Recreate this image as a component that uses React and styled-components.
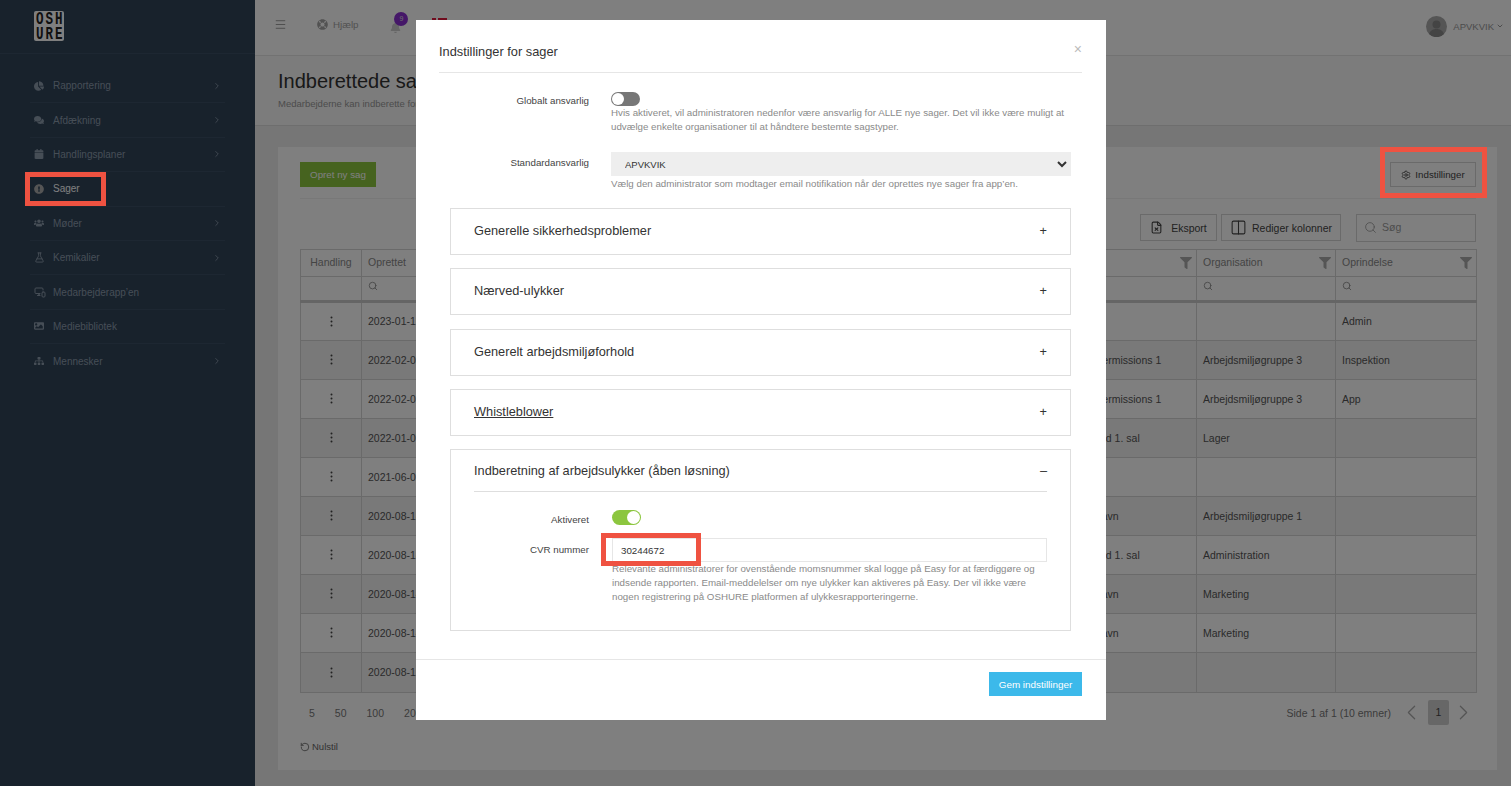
import React from 'react'
import styled, {createGlobalStyle} from 'styled-components'
import {
	FaChartPie, FaComments, FaCalendar, FaExclamationCircle, FaUsers, FaImage, FaSitemap,
	FaLifeRing, FaBell, FaFilter,
} from 'react-icons/fa'
import {
	ChevronRight, ChevronLeft, ChevronDown, FlaskConical, MonitorSmartphone, Menu, Search,
	Settings, FileX, Columns2, RotateCcw,
} from 'lucide-react'

const GlobalStyle = createGlobalStyle`
	html, body {
		margin: 0;
		padding: 0;
		height: 100%;
		overflow: hidden;
		background: #ededed;
	}
	* { box-sizing: border-box; }
	body {
		font-family: "Liberation Sans", Arial, sans-serif;
		color: #333;
	}
`

const Page = styled.div`
	display: flex;
	width: 1511px;
	height: 786px;
	overflow: hidden;
`

const Highlight = styled.span`
	position: absolute;
	z-index: 20;
	top: ${p => p.$top}px;
	left: ${p => p.$left}px;
	width: ${p => p.$width}px;
	height: ${p => p.$height}px;
	border: 5px solid #ef5241;
	pointer-events: none;
`

/* sidebar */
const Sidebar = styled.aside`
	flex: 0 0 255px;
	background: #304459;
`

const LogoBar = styled.div`
	height: 54px;
	padding: 11px 0 0 34px;
	border-bottom: 1px solid #3a4f64;
`

const Logo = styled.div`
	width: 30px;
	height: 30px;
	border-radius: 2px;
	background: #fff;
`

const LogoText = styled.div`
	color: #222;
	font-family: "Liberation Mono", monospace;
	font-size: 12.5px;
	font-weight: 700;
	line-height: 10.7px;
	letter-spacing: 2px;
	padding: 1px 0 0 2px;
	white-space: pre;
	transform: scaleY(1.4);
	transform-origin: top;
`

const Nav = styled.nav`
	padding: 15px 30px 0;
`

const NavItem = styled.a`
	position: relative;
	display: flex;
	align-items: center;
	height: 34.4px;
	padding-left: 4px;
	font-size: 10px;
	color: ${p => p.$active ? '#fff' : '#8d9cad'};
	border-bottom: ${p => p.$last ? 'none' : '1px solid #3a4f64'};
`

const NavIcon = styled.span`
	flex: 0 0 19px;
	display: flex;
	align-items: center;
	font-size: 10px;
	color: ${p => p.$active ? '#aaa' : '#8d9cad'};
`

const NavLabel = styled.span`
	flex: 1;
`

const NavChevron = styled(ChevronRight)`
	width: 10px;
	height: 10px;
	margin-right: 3px;
`

/* main column */
const Main = styled.main`
	flex: 1;
	display: flex;
	flex-direction: column;
	min-width: 0;
`

const Topbar = styled.header`
	flex: 0 0 56px;
	display: flex;
	align-items: center;
	padding: 0 7px 6px 19px;
	background: #fff;
	border-bottom: 1px solid #e4e4e4;
	color: #888;
`

const TopItem = styled.span`
	display: flex;
	align-items: center;
	gap: 5px;
	margin-left: ${p => p.$gap}px;
	font-size: 9.75px;
	color: #a4a4a4;
`

const BellWrap = styled.span`
	position: relative;
	display: flex;
	margin-left: 32px;
	font-size: 11px;
	color: #ccc;
	padding-top: 5px;
`

const Badge = styled.span`
	position: absolute;
	top: -5px;
	left: 4px;
	width: 14px;
	height: 14px;
	border-radius: 50%;
	background: #8a2fd0;
	color: #ddd;
	font-size: 7px;
	line-height: 14px;
	text-align: center;
`

const Flag = styled.svg`
	display: block;
	align-self: flex-start;
	width: 15px;
	height: 11px;
	margin: 18px 0 0 31px;
`

const Account = styled.div`
	margin-left: auto;
	display: flex;
	align-items: center;
	gap: 6px;
	font-size: 9.5px;
	color: #999;
	padding-top: 3px;
`

const Avatar = styled.svg`
	display: block;
	width: 21px;
	height: 21px;
`

const SubHeader = styled.div`
	flex: 0 0 70px;
	padding: 12px 23px 0;
	background: #f8f8f8;
	border-bottom: 1px solid #dcdcdc;
`

const Title = styled.h1`
	margin: 0;
	font-size: 20px;
	font-weight: 400;
	line-height: 26px;
	color: #333;
`

const SubTitle = styled.p`
	margin: 4px 0 0;
	font-size: 9.5px;
	color: #999;
`

const Content = styled.div`
	flex: 1;
	display: flex;
	padding: 21px 14px 16px 23px;
	background: #ededed;
	min-height: 0;
`

const Card = styled.section`
	flex: 1;
	padding: 15px 21px 0 22px;
	background: #fff;
	min-width: 0;
`

const CardTop = styled.div`
	display: flex;
	justify-content: space-between;
	align-items: center;
	padding-bottom: 11px;
	border-bottom: 1px solid #f1f1f1;
`

const GreenButton = styled.button`
	width: 76px;
	height: 25px;
	padding: 0;
	border: none;
	background: #8cc63f;
	color: #fff;
	font: 400 9.75px "Liberation Sans", sans-serif;
`

const OutlineButton = styled.button`
	position: relative;
	display: flex;
	align-items: center;
	justify-content: center;
	gap: ${p => p.$gap || 4}px;
	width: ${p => p.$width}px;
	height: ${p => p.$height}px;
	padding: 0;
	background: #fff;
	border: 1px solid #d4d4d4;
	color: #444;
	font: 400 ${p => p.$size || 10.5}px "Liberation Sans", sans-serif;
`

const Toolbar = styled.div`
	display: flex;
	justify-content: flex-end;
	align-items: flex-start;
	gap: 4px;
	margin-top: 15px;
	height: 35px;
`

const SearchBox = styled.div`
	display: flex;
	align-items: center;
	gap: 5px;
	width: 120px;
	height: 28px;
	margin-left: 11px;
	padding: 0 0 2px 7px;
	border: 1px solid #d4d4d4;
	font-size: 10.5px;
	color: #999;
`

const Table = styled.table`
	width: 1176px;
	border-collapse: collapse;
	table-layout: fixed;
	font-size: 10.5px;
	color: #666;
`

const HeadCell = styled.th`
	position: relative;
	height: 27px;
	padding: 0 6px 2px;
	border: 1px solid #d4d4d4;
	font-weight: 400;
	text-align: ${p => p.$center ? 'center' : 'left'};
	color: #888;
`

const FilterIcon = styled(FaFilter)`
	position: absolute;
	top: 7px;
	right: 4px;
	width: 12px;
	height: 12px;
	color: #aaa;
`

const FilterCell = styled.td`
	height: 25px;
	padding: 0 6px 5px;
	border: 1px solid #d4d4d4;
	border-bottom: 3px solid #cacaca;
	color: #888;
`

const SmallSearch = styled(Search)`
	display: block;
	width: 10px;
	height: 10px;
`

const Row = styled.tr`
	background: ${p => p.$odd ? '#f2f2f2' : '#fff'};
	&:last-child td {
		height: 40px;
	}
`

const Cell = styled.td`
	height: 39px;
	padding: 0 6px 1px;
	border: 1px solid #d4d4d4;
	white-space: nowrap;
	overflow: hidden;
	color: #555;
`

const ActionCell = styled(Cell)`
	text-align: center;
	color: #444;
`

const Dots = styled.svg`
	display: block;
	width: 3px;
	height: 11px;
	margin: 0 auto;
`

const PagerRow = styled.div`
	display: flex;
	justify-content: space-between;
	align-items: center;
	height: 25px;
	margin-top: 7px;
	font-size: 10.5px;
	color: #777;
`

const PageSizes = styled.div`
	display: flex;
	gap: 20px;
	padding-left: 9px;
`

const Pager = styled.div`
	display: flex;
	align-items: center;
`

const PagerArrow = styled.span`
	display: flex;
	margin: ${p => p.$margin};
	color: #aaa;
`

const PageNumber = styled.span`
	width: 21px;
	height: 25px;
	border-radius: 2px;
	background: #cfcfcf;
	color: #444;
	line-height: 25px;
	text-align: center;
`

const Reset = styled.div`
	display: flex;
	align-items: center;
	gap: 2px;
	margin-top: 16px;
	font-size: 9.5px;
	color: #666;
`

/* dialog */
const Overlay = styled.div`
	position: absolute;
	inset: 0;
	z-index: 10;
	background: rgba(0, 0, 0, 0.5);
`

const Modal = styled.div`
	width: 690px;
	height: 700px;
	margin: 20px 0 0 416px;
	padding: 0 24px 0 23px;
	background: #fff;
	position: relative;
`

const ModalHeader = styled.div`
	display: flex;
	justify-content: space-between;
	height: 53px;
	padding-top: 24px;
	border-bottom: 1px solid #e6e6e6;
	font-size: 12.8px;
	color: #333;
`

const Close = styled.span`
	margin-top: 1px;
	font-size: 14px;
	line-height: 9px;
	color: #bbb;
`

const FormRow = styled.div`
	display: grid;
	grid-template-columns: ${p => p.$label}px 1fr;
	column-gap: ${p => p.$gap}px;
	margin-top: ${p => p.$top}px;
`

const FormLabel = styled.label`
	text-align: right;
	font-size: 9.75px;
	color: #444;
	padding-top: ${p => p.$pad}px;
`

const Toggle = styled.span`
	position: relative;
	display: block;
	width: 29px;
	height: ${p => p.$on ? 15 : 14}px;
	border-radius: 8px;
	background: ${p => p.$on ? '#8cc63f' : '#777'};
	&::after {
		content: '';
		position: absolute;
		top: 1px;
		left: ${p => p.$on ? '15px' : '1px'};
		width: ${p => p.$on ? 13 : 12}px;
		height: ${p => p.$on ? 13 : 12}px;
		border-radius: 50%;
		background: #fff;
	}
`

const Help = styled.p`
	margin: ${p => p.$top || 0}px 0 0;
	font-size: 9.75px;
	line-height: 14px;
	color: #8a8a8a;
`

const Select = styled.select`
	display: block;
	width: 460px;
	height: 24px;
	padding-left: 9px;
	background: #eee;
	border: 1px solid #eee;
	border-radius: 0;
	font: 400 9.5px "Liberation Sans", sans-serif;
	color: #333;
`

const Accordion = styled.div`
	width: 621px;
	margin: ${p => p.$top}px 0 0 11px;
	padding: 0 23px;
	height: ${p => p.$height}px;
	border: 1px solid #dedede;
`

const AccordionHead = styled.div`
	display: flex;
	justify-content: space-between;
	align-items: center;
	height: ${p => p.$open ? 42 : 42}px;
	font-size: 12.75px;
	color: #333;
	border-bottom: ${p => p.$open ? '1px solid #dedede' : 'none'};
`

const AccordionTitle = styled.span`
	text-decoration: ${p => p.$underline ? 'underline' : 'none'};
`

const AccordionBody = styled.div`
	padding-top: 18px;
`

const TextField = styled.input`
	position: relative;
	display: block;
	width: 435px;
	height: 24px;
	padding: 0 0 0 8px;
	border: 1px solid #e6e6e6;
	font: 400 9.75px "Liberation Sans", sans-serif;
	color: #333;
	outline: none;
`

const FieldWrap = styled.div`
	position: relative;
`

const ModalFooter = styled.div`
	display: flex;
	justify-content: flex-end;
	margin: 28px -24px 0 -23px;
	padding: 12px 24px 0 0;
	border-top: 1px solid #e6e6e6;
`

const SaveButton = styled.button`
	width: 93px;
	height: 24px;
	padding: 0;
	border: none;
	background: #3cb9ea;
	color: #fff;
	font: 400 9.9px "Liberation Sans", sans-serif;
`

const navItems = [
	{label: 'Rapportering', icon: <FaChartPie/>, more: true},
	{label: 'Afdækning', icon: <FaComments/>, more: true},
	{label: 'Handlingsplaner', icon: <FaCalendar/>, more: true},
	{label: 'Sager', icon: <FaExclamationCircle/>, active: true},
	{label: 'Møder', icon: <FaUsers/>, more: true},
	{label: 'Kemikalier', icon: <FlaskConical size={11}/>, more: true},
	{label: 'Medarbejderapp’en', icon: <MonitorSmartphone size={12}/>},
	{label: 'Mediebibliotek', icon: <FaImage/>},
	{label: 'Mennesker', icon: <FaSitemap/>, more: true},
]

const rows = [
	{date: '2023-01-12', origin: 'Admin'},
	{date: '2022-02-03', place: 'Tester permissions 1', org: 'Arbejdsmiljøgruppe 3', origin: 'Inspektion'},
	{date: '2022-02-03', place: 'Tester permissions 1', org: 'Arbejdsmiljøgruppe 3', origin: 'App'},
	{date: '2022-01-07', place: 'Lager ved 1. sal', org: 'Lager'},
	{date: '2021-06-02'},
	{date: '2020-08-18', place: 'København', org: 'Arbejdsmiljøgruppe 1'},
	{date: '2020-08-18', place: 'Lager ved 1. sal', org: 'Administration'},
	{date: '2020-08-14', place: 'København', org: 'Marketing'},
	{date: '2020-08-14', place: 'København', org: 'Marketing'},
	{date: '2020-08-12'},
]

const columns = [61, 139, 200, 200, 158, 138, 139, 141]
const closedSections = [
	{title: 'Generelle sikkerhedsproblemer', top: 17},
	{title: 'Nærved-ulykker', top: 13},
	{title: 'Generelt arbejdsmiljøforhold', top: 14},
	{title: 'Whistleblower', top: 13, underline: true},
]

const App = () => (
	<Page>
		<GlobalStyle/>
		<Sidebar>
			<LogoBar><Logo><LogoText>{'OSH\nURE'}</LogoText></Logo></LogoBar>
			<Nav>
				{navItems.map((item, i) => (
					<NavItem key={item.label} $active={item.active} $last={i === navItems.length - 1}>
						<NavIcon $active={item.active}>{item.icon}</NavIcon>
						<NavLabel>{item.label}</NavLabel>
						{item.more && <NavChevron/>}
						{item.active && <Highlight $top={0} $left={-5} $width={81} $height={34}/>}
					</NavItem>
				))}
			</Nav>
		</Sidebar>
		<Main>
			<Topbar>
				<Menu size={13} strokeWidth={1.5}/>
				<TopItem $gap={30}><FaLifeRing size={11}/> Hjælp</TopItem>
				<BellWrap><FaBell/><Badge>9</Badge></BellWrap>
				<Flag viewBox="0 0 15 11">
					<rect width="15" height="11" fill="#e0183c"/>
					<rect x="4" width="2" height="11" fill="#fff"/>
					<rect y="4.5" width="15" height="2" fill="#fff"/>
				</Flag>
				<Account>
					<Avatar viewBox="0 0 21 21">
						<circle cx="10.5" cy="10.5" r="10.5" fill="#aaa"/>
						<circle cx="10.5" cy="8.5" r="4" fill="#888"/>
						<path d="M3 18c1.500-4 4.500-5 7.500-5s6 1 7.500 5a10.500 10.500 0 0 1-15 0z" fill="#888"/>
					</Avatar>
					APVKVIK <ChevronDown size={8} strokeWidth={3} style={{marginLeft: -4}}/>
				</Account>
			</Topbar>
			<SubHeader>
				<Title>Indberettede sager</Title>
				<SubTitle>Medarbejderne kan indberette forhold via app’en</SubTitle>
			</SubHeader>
			<Content>
				<Card>
					<CardTop>
						<GreenButton>Opret ny sag</GreenButton>
						<OutlineButton $width={86} $height={25} $size={9.75}>
							<Settings size={10}/> Indstillinger
							<Highlight $top={-16} $left={-11} $width={107} $height={51}/>
						</OutlineButton>
					</CardTop>
					<Toolbar>
						<OutlineButton $width={77} $height={27} $gap={8}><FileX size={13}/> Eksport</OutlineButton>
						<OutlineButton $width={120} $height={27} $gap={5}><Columns2 size={17} strokeWidth={1.5}/> Rediger kolonner</OutlineButton>
						<SearchBox><Search size={13} strokeWidth={1.5}/> Søg</SearchBox>
					</Toolbar>
					<Table>
						<colgroup>
							{columns.map((w, i) => <col key={i} style={{width: w}}/>)}
						</colgroup>
						<thead>
							<tr>
								<HeadCell $center>Handling</HeadCell>
								<HeadCell>Oprettet</HeadCell>
								<HeadCell/>
								<HeadCell/>
								<HeadCell/>
								<HeadCell><FilterIcon/></HeadCell>
								<HeadCell>Organisation<FilterIcon/></HeadCell>
								<HeadCell>Oprindelse<FilterIcon/></HeadCell>
							</tr>
							<tr>
								<FilterCell/>
								<FilterCell><SmallSearch/></FilterCell>
								<FilterCell/>
								<FilterCell/>
								<FilterCell/>
								<FilterCell><SmallSearch/></FilterCell>
								<FilterCell><SmallSearch/></FilterCell>
								<FilterCell><SmallSearch/></FilterCell>
							</tr>
						</thead>
						<tbody>
							{rows.map((r, i) => (
								<Row key={i} $odd={i % 2 === 1}>
									<ActionCell>
										<Dots viewBox="0 0 3 11" fill="currentColor">
											<circle cx="1.5" cy="1.500" r="1"/>
											<circle cx="1.5" cy="5.500" r="1"/>
											<circle cx="1.5" cy="9.500" r="1"/>
										</Dots>
									</ActionCell>
									<Cell>{r.date}</Cell>
									<Cell/>
									<Cell/>
									<Cell/>
									<Cell>{r.place}</Cell>
									<Cell>{r.org}</Cell>
									<Cell>{r.origin}</Cell>
								</Row>
							))}
						</tbody>
					</Table>
					<PagerRow>
						<PageSizes>
							<span>5</span><span>50</span><span>100</span><span>200</span>
						</PageSizes>
						<Pager>
							Side 1 af 1 (10 emner)
							<PagerArrow $margin="0 4px 0 8px"><ChevronLeft size={25} strokeWidth={1.2}/></PagerArrow>
							<PageNumber>1</PageNumber>
							<PagerArrow $margin="0 0 0 2px"><ChevronRight size={25} strokeWidth={1.2}/></PagerArrow>
						</Pager>
					</PagerRow>
					<Reset><RotateCcw size={10}/> Nulstil</Reset>
				</Card>
			</Content>
		</Main>
		<Overlay>
			<Modal>
				<ModalHeader>
					Indstillinger for sager
					<Close>×</Close>
				</ModalHeader>
				<FormRow $label={150} $gap={22} $top={19}>
					<FormLabel $pad={3}>Globalt ansvarlig</FormLabel>
					<div>
						<Toggle/>
						<Help>Hvis aktiveret, vil administratoren nedenfor være ansvarlig for ALLE nye sager. Det vil ikke være muligt at udvælge enkelte organisationer til at håndtere bestemte sagstyper.</Help>
					</div>
				</FormRow>
				<FormRow $label={150} $gap={22} $top={18}>
					<FormLabel $pad={5}>Standardansvarlig</FormLabel>
					<div>
						<Select defaultValue="APVKVIK"><option>APVKVIK</option></Select>
						<Help $top={1}>Vælg den administrator som modtager email notifikation når der oprettes nye sager fra app’en.</Help>
					</div>
				</FormRow>
				{closedSections.map(s => (
					<Accordion key={s.title} $top={s.top} $height={47}>
						<AccordionHead>
							<AccordionTitle $underline={s.underline}>{s.title}</AccordionTitle>
							<span>+</span>
						</AccordionHead>
					</Accordion>
				))}
				<Accordion $top={13} $height={182}>
					<AccordionHead $open>
						Indberetning af arbejdsulykker (åben løsning)
						<span>–</span>
					</AccordionHead>
					<AccordionBody>
						<FormRow $label={115} $gap={23} $top={0}>
							<FormLabel $pad={4}>Aktiveret</FormLabel>
							<Toggle $on/>
						</FormRow>
						<FormRow $label={115} $gap={23} $top={13}>
							<FormLabel $pad={6}>CVR nummer</FormLabel>
							<div>
								<FieldWrap>
									<TextField defaultValue="30244672" readOnly/>
									<Highlight $top={-5} $left={-11} $width={100} $height={33}/>
								</FieldWrap>
								<Help $top={0}>Relevante administratorer for ovenstående momsnummer skal logge på Easy for at færdiggøre og indsende rapporten. Email-meddelelser om nye ulykker kan aktiveres på Easy. Der vil ikke være nogen registrering på OSHURE platformen af ulykkesrapporteringerne.</Help>
							</div>
						</FormRow>
					</AccordionBody>
				</Accordion>
				<ModalFooter>
					<SaveButton>Gem indstillinger</SaveButton>
				</ModalFooter>
			</Modal>
		</Overlay>
	</Page>
)

export default App
